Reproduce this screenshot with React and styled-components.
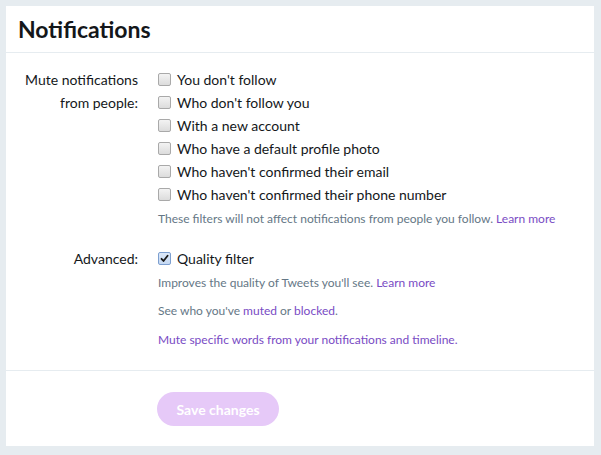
import React, {useState} from "react";
import styled, {createGlobalStyle} from 'styled-components';

const GlobalStyle = createGlobalStyle`
  html, body {
    margin: 0;
    padding: 0;
    background: #e6ecf0;
  }
  body {
    font-family: 'Lato', 'Noto Sans', sans-serif;
    color: #14171a;
  }
`

const Page = styled.div`
  padding: 6px 7px 9px 6px;
`

const Card = styled.div`
  background: #fff;
`

const Header = styled.div`
  height: 46px;
  display: flex;
  align-items: center;
  padding: 0 12px;
  border-bottom: 1px solid #e6ecf0;
`

const Title = styled.h1`
  margin: 0;
  font-size: 23px;
  font-weight: 700;
  color: #14171a;
`

const Body = styled.div`
  padding: 15px 0 21px 0;
  border-bottom: 1px solid #e6ecf0;
  display: flex;
  flex-direction: column;
  gap: 19px;
`

const Section = styled.div`
  display: grid;
  grid-template-columns: 132px 1fr;
  column-gap: 20px;
`

const Label = styled.div`
  text-align: right;
  font-size: 14px;
  line-height: 23px;
  color: #14171a;
`

const Controls = styled.div`
  display: flex;
  flex-direction: column;
`

const Row = styled.label`
  display: flex;
  align-items: center;
  gap: 6px;
  height: 23px;
  font-size: 14px;
  color: #14171a;
  cursor: pointer;
`

const Box = styled.span`
  width: 13px;
  height: 13px;
  box-sizing: border-box;
  border-radius: 2px;
  border: 1px solid ${p => p.$on ? '#7d9fd0' : '#a9a9a9'};
  background: ${p => p.$on ? 'linear-gradient(#dce8f8, #c6d9f3)' : 'linear-gradient(#f3f3f3, #dcdcdc)'};
  display: flex;
  align-items: center;
  justify-content: center;
  flex-shrink: 0;
`

const Help = styled.div`
  font-size: 12px;
  line-height: 18px;
  color: #657786;
  margin-top: ${p => p.$gap || 0}px;
`

const Link = styled.a`
  color: #794bc4;
  text-decoration: none;
  cursor: pointer;
`

const Footer = styled.div`
  display: grid;
  grid-template-columns: 132px 1fr;
  column-gap: 19px;
  padding: 21px 0 20px 0;
`

const SaveButton = styled.button`
  grid-column: 2;
  justify-self: start;
  width: 122px;
  height: 34px;
  padding: 0;
  border: none;
  border-radius: 17px;
  background: #e6c9f8;
  color: #fff;
  font-family: 'Lato', 'Noto Sans', sans-serif;
  font-size: 14px;
  font-weight: 700;
`

const Checkbox = ({checked, onToggle, children}) => (
  <Row onClick={onToggle}>
    <Box $on={checked}>
      {checked && (
        <svg width="9" height="9" viewBox="0 0 9 9">
          <path d="M1.5 4.8 L3.5 7 L7.6 1.8" stroke="#1a1a1a" strokeWidth="1.8" fill="none" strokeLinecap="round" strokeLinejoin="round" />
        </svg>
      )}
    </Box>
    {children}
  </Row>
)

const App = () => {
  const filters = [
    "You don't follow",
    "Who don't follow you",
    "With a new account",
    "Who have a default profile photo",
    "Who haven't confirmed their email",
    "Who haven't confirmed their phone number",
  ];
  const [muted, setMuted] = useState(filters.map(() => false));
  const [quality, setQuality] = useState(true);

  const toggle = (i) => {
    setMuted(muted.map((m, j) => j === i ? !m : m));
  }

  return (
    <Page>
      <GlobalStyle />
      <Card>
        <Header>
          <Title>Notifications</Title>
        </Header>
        <Body>
          <Section>
            <Label>Mute notifications<br />from people:</Label>
            <Controls>
              {filters.map((f, i) => (
                <Checkbox key={f} checked={muted[i]} onToggle={() => toggle(i)}>{f}</Checkbox>
              ))}
              <Help $gap={4}>These filters will not affect notifications from people you follow. <Link>Learn more</Link></Help>
            </Controls>
          </Section>
          <Section>
            <Label>Advanced:</Label>
            <Controls>
              <Checkbox checked={quality} onToggle={() => setQuality(!quality)}>Quality filter</Checkbox>
              <Help $gap={4}>Improves the quality of Tweets you'll see. <Link>Learn more</Link></Help>
              <Help $gap={10}>See who you've <Link>muted</Link> or <Link>blocked</Link>.</Help>
              <Help $gap={11}><Link>Mute specific words from your notifications and timeline.</Link></Help>
            </Controls>
          </Section>
        </Body>
        <Footer>
          <SaveButton>Save changes</SaveButton>
        </Footer>
      </Card>
    </Page>
  )
}

export default App;
